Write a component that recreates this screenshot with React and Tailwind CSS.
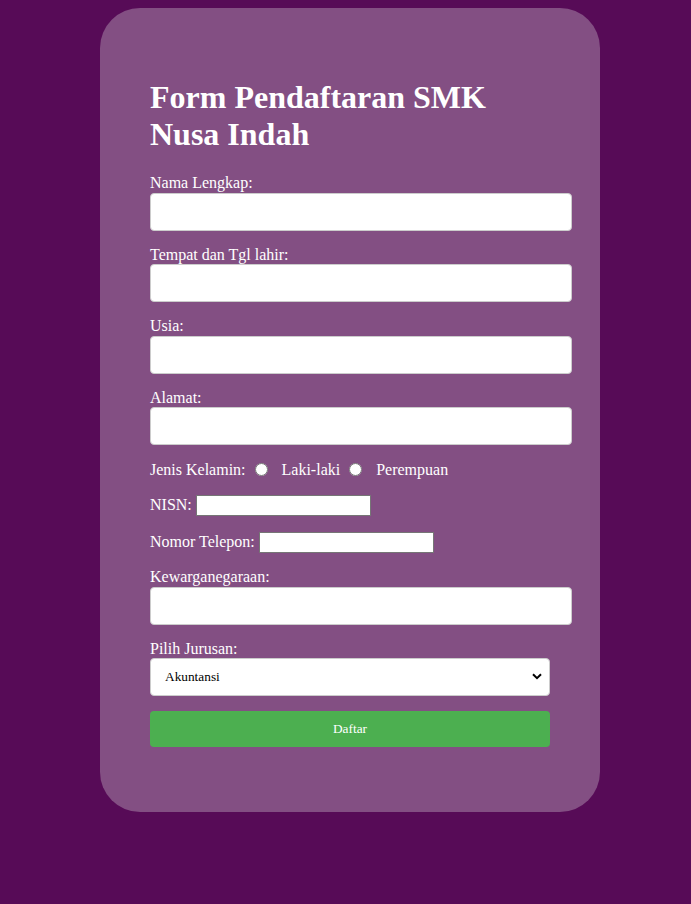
import React from "react";

function Field({ label }) {
    return (
        <div className="mb-[15px]">
            <label className="block text-[16px] leading-[18.4px]">{label}</label>
            <input
                type="text"
                className="box-content block w-full h-[16px] p-[10px] bg-white border border-[#cccccc] rounded-[4px] text-[13.33px] text-black outline-none"
            />
        </div>
    );
}

function InlineField({ label }) {
    return (
        <div className="mb-[15px] flex items-center h-[22px] text-[16px]">
            <span>{label}</span>
            <input
                type="text"
                className="ml-[4px] w-[175px] h-[21px] bg-white border border-[#767676] text-[13.33px] text-black outline-none"
            />
        </div>
    );
}

export default function App() {
    return (
        <div className="min-h-screen bg-[#570b57] pt-[8px] pb-[90px] font-['Liberation_Serif',serif] text-white">

            {/* Card */}
            <div className="ml-[100px] w-[500px] bg-[#834f83] rounded-[40px] px-[50px] pt-[50px] pb-[51px]">

                <h1 className="my-[21.44px] text-[32px] leading-[36.8px] font-bold">
                    Form Pendaftaran SMK Nusa Indah
                </h1>

                <Field label="Nama Lengkap:" />
                <Field label="Tempat dan Tgl lahir:" />
                <Field label="Usia:" />
                <Field label="Alamat:" />

                {/* Jenis kelamin */}
                <div className="mb-[15px] flex items-center h-[19px] text-[16px]">
                    <span>Jenis Kelamin:</span>
                    <input type="radio" name="jk" className="ml-[9px] mr-[3px] w-[13px] h-[13px]" />
                    <span className="ml-[11px]">Laki-laki</span>
                    <input type="radio" name="jk" className="ml-[9px] mr-[3px] w-[13px] h-[13px]" />
                    <span className="ml-[11px]">Perempuan</span>
                </div>

                <InlineField label="NISN:" />
                <InlineField label="Nomor Telepon:" />

                <Field label="Kewarganegaraan:" />

                <div className="mb-[15px]">
                    <label className="block text-[16px] leading-[18.4px]">Pilih Jurusan:</label>
                    <div className="relative w-[400px]">
                        <select className="block w-[400px] h-[38px] pl-[14px] pr-[30px] bg-white border border-[#cccccc] rounded-[4px] text-[13.33px] text-black appearance-none outline-none">
                            <option>Akuntansi</option>
                            <option>Teknik Komputer dan Jaringan</option>
                            <option>Rekayasa Perangkat Lunak</option>
                        </select>
                        <svg
                            className="absolute right-[8px] top-[15px] w-[10px] h-[7px] pointer-events-none"
                            viewBox="0 0 10 7"
                        >
                            <path d="M1 1.2 L5 5.2 L9 1.2" fill="none" stroke="#000" strokeWidth="2" />
                        </svg>
                    </div>
                </div>

                <button className="block w-[400px] h-[36px] mb-[14px] bg-[#4caf50] rounded-[4px] text-[13.33px] text-white">
                    Daftar
                </button>

            </div>
        </div>
    );
}
